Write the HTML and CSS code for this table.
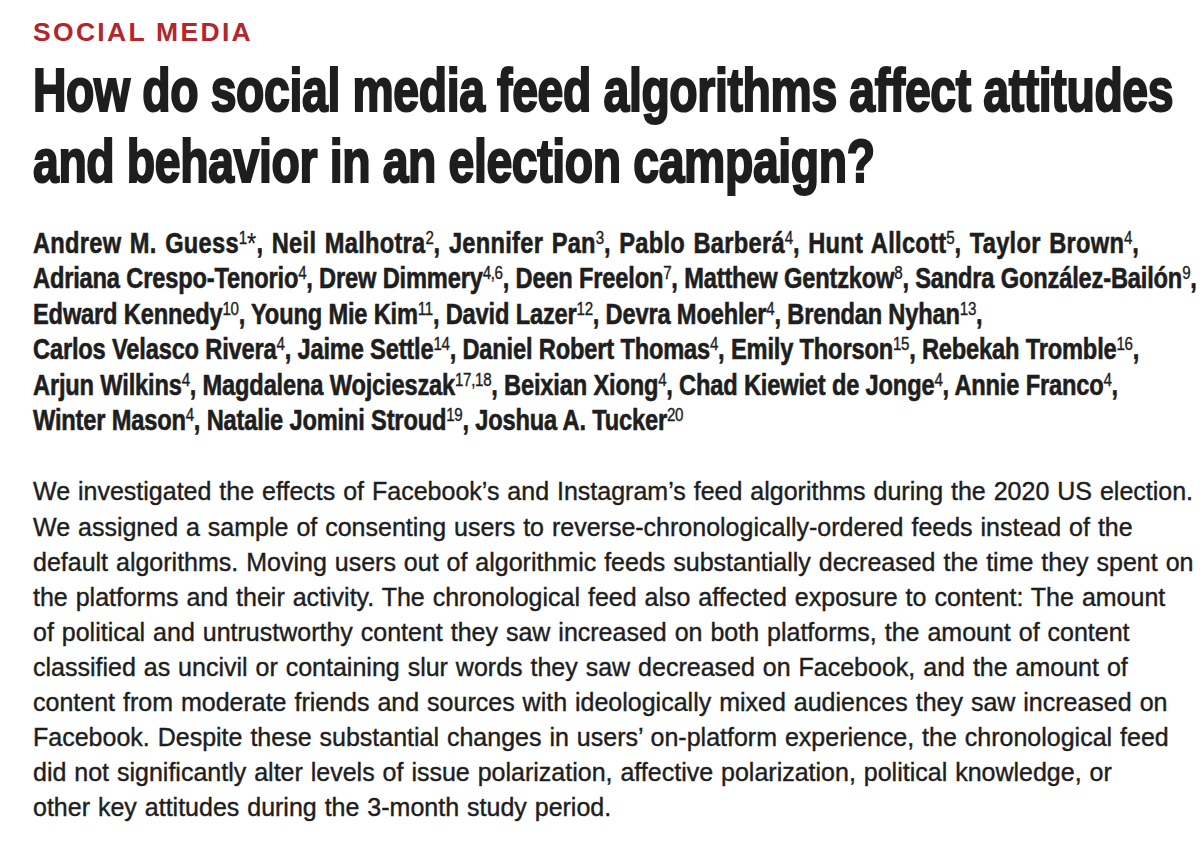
FILE: index.html
```html
<!DOCTYPE html>
<html lang="en">
<head>
<meta charset="utf-8">
<title>How do social media feed algorithms affect attitudes and behavior in an election campaign?</title>
<link rel="stylesheet" href="styles.css">
</head>
<body>
<main class="article">
  <div class="kicker">SOCIAL MEDIA</div>
  <h1 class="title">How do social media feed algorithms affect attitudes<br>and behavior in an election campaign?</h1>
  <p class="authors">
    <span class="first-line">Andrew M. Guess<sup>1</sup><span class="star">*</span>, Neil Malhotra<sup>2</sup>, Jennifer Pan<sup>3</sup>, Pablo Barberá<sup>4</sup>, Hunt Allcott<sup>5</sup>, Taylor Brown<sup>4</sup>,</span><br>
    Adriana Crespo-Tenorio<sup>4</sup>, Drew Dimmery<sup>4,6</sup>, Deen Freelon<sup>7</sup>, Matthew Gentzkow<sup>8</sup>, Sandra González-Bailón<sup>9</sup>,<br>
    Edward Kennedy<sup>10</sup>, Young Mie Kim<sup>11</sup>, David Lazer<sup>12</sup>, Devra Moehler<sup>4</sup>, Brendan Nyhan<sup>13</sup>,<br>
    Carlos Velasco Rivera<sup>4</sup>, Jaime Settle<sup>14</sup>, Daniel Robert Thomas<sup>4</sup>, Emily Thorson<sup>15</sup>, Rebekah Tromble<sup>16</sup>,<br>
    Arjun Wilkins<sup>4</sup>, Magdalena Wojcieszak<sup>17,18</sup>, Beixian Xiong<sup>4</sup>, Chad Kiewiet de Jonge<sup>4</sup>, Annie Franco<sup>4</sup>,<br>
    Winter Mason<sup>4</sup>, Natalie Jomini Stroud<sup>19</sup>, Joshua A. Tucker<sup>20</sup>
  </p>
  <p class="abstract">
    We investigated the effects of Facebook’s and Instagram’s feed algorithms during the 2020 US election.<br>
    We assigned a sample of consenting users to reverse-chronologically-ordered feeds instead of the<br>
    default algorithms. Moving users out of algorithmic feeds substantially decreased the time they spent on<br>
    the platforms and their activity. The chronological feed also affected exposure to content: The amount<br>
    of political and untrustworthy content they saw increased on both platforms, the amount of content<br>
    classified as uncivil or containing slur words they saw decreased on Facebook, and the amount of<br>
    content from moderate friends and sources with ideologically mixed audiences they saw increased on<br>
    Facebook. Despite these substantial changes in users’ on-platform experience, the chronological feed<br>
    did not significantly alter levels of issue polarization, affective polarization, political knowledge, or<br>
    other key attitudes during the 3-month study period.
  </p>
</main>
</body>
</html>
```
FILE: styles.css
```css
html, body {
  margin: 0;
  padding: 0;
  background: #ffffff;
}

body {
  color: #1e1e1e;
  font-family: "Liberation Sans", Arial, sans-serif;
}

.article {
  padding: 17px 0 0 33px;
  white-space: nowrap;
}

.kicker {
  font-weight: 700;
  font-size: 26.5px;
  line-height: 30px;
  letter-spacing: 2.3px;
  color: #b3262b;
}

/* condensed display face: Arial Bold squeezed horizontally */
.title {
  margin: 7px 0 0 0;
  font-weight: 700;
  font-size: 62px;
  line-height: 71px;
  letter-spacing: -0.5px;
  -webkit-text-stroke: 2.2px #1e1e1e;
  color: #1e1e1e;
  transform: scaleX(0.748);
  transform-origin: left top;
}

.authors {
  margin: 30px 0 0 0;
  font-weight: 700;
  font-size: 29px;
  line-height: 35.4px;
  letter-spacing: -0.2px;
  -webkit-text-stroke: 0.6px #1e1e1e;
  transform: scaleX(0.815);
  transform-origin: left top;
}

.authors .first-line {
  letter-spacing: 0.35px;
  word-spacing: 2px;
}

.authors sup {
  font-size: 0.64em;
  font-weight: 400;
  line-height: 0;
  vertical-align: 0.5em;
  letter-spacing: -0.4px;
  word-spacing: 0;
  -webkit-text-stroke: 0.4px #1e1e1e;
}

.authors .star {
  font-weight: 400;
  -webkit-text-stroke: 0.2px #1e1e1e;
}

.abstract {
  margin: 36px 0 0 0;
  font-weight: 400;
  font-size: 25px;
  line-height: 35.1px;
  word-spacing: 1px;
  -webkit-text-stroke: 0.4px #1e1e1e;
}
```
